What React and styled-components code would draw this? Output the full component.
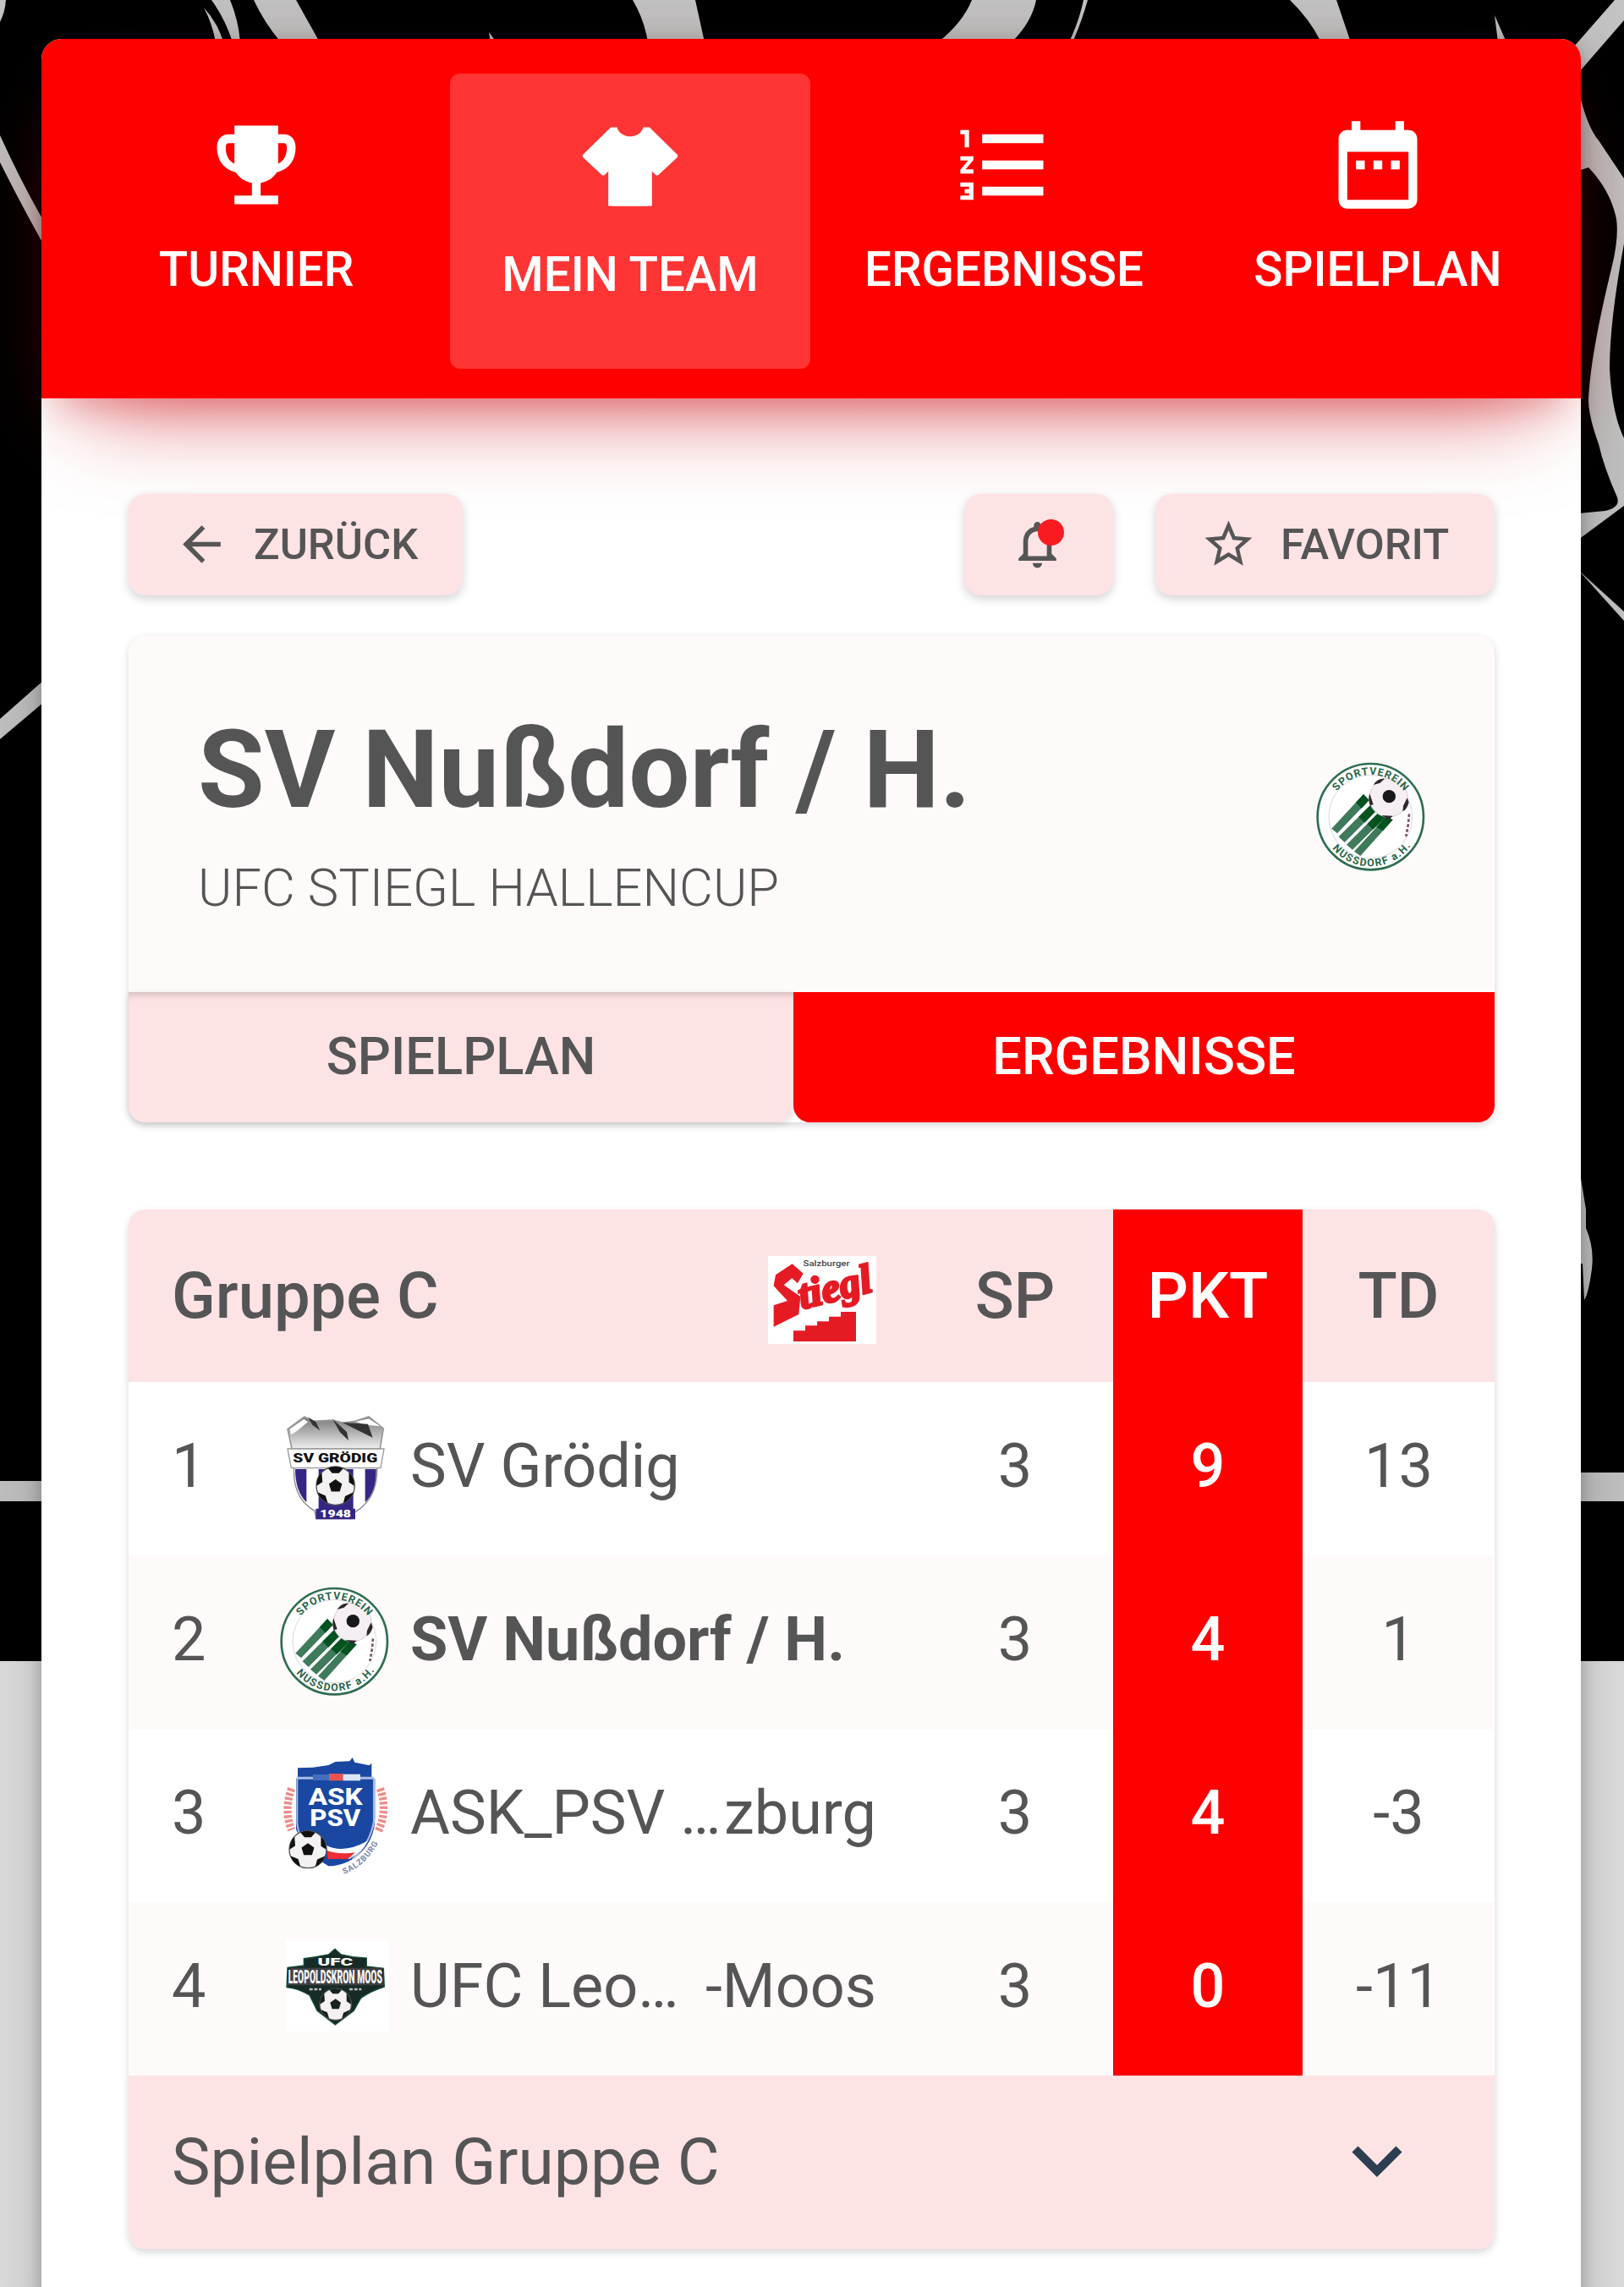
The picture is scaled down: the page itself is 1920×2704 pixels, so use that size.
import React from 'react'
import styled, { createGlobalStyle } from 'styled-components'
import { MdArrowBack, MdDateRange, MdFormatListNumbered, MdNotificationsNone, MdStarBorder } from 'react-icons/md'

const tabs = [
    { label: 'TURNIER', icon: 'trophy' },
    { label: 'MEIN TEAM', icon: 'shirt', active: true },
    { label: 'ERGEBNISSE', icon: 'list' },
    { label: 'SPIELPLAN', icon: 'calendar' },
]

const teams = [
    { rank: 1, logo: 'groedig', name: 'SV Grödig', sp: 3, pkt: 9, td: 13 },
    { rank: 2, logo: 'nussdorf', name: 'SV Nußdorf / H.', sp: 3, pkt: 4, td: 1, own: true },
    { rank: 3, logo: 'ask', name: 'ASK_PSV …', end: 'zburg', sp: 3, pkt: 4, td: -3 },
    { rank: 4, logo: 'moos', name: 'UFC Leo…', end: '-Moos', sp: 3, pkt: 0, td: -11 },
]

const Backdrop = () => (
    <BackdropSvg viewBox="0 0 1920 1964" preserveAspectRatio="none">
        <rect width="1920" height="1964" fill="#000" />
        <g fill="#c4c3c3">
            <path d="M0 0H7Q6 14 0 26Z" />
            <path d="M241 9Q258 28 264 50H255Q251 28 241 9Z" />
            <path d="M250 0H272Q282 24 284 50H275Q266 22 250 0Z" />
            <path d="M300 0H350L378 50H332Q312 26 300 0Z" />
            <path d="M578 38L587 50H580Z" />
            <path d="M748 0H822L833 50H766Q762 24 748 0Z" />
            <path d="M1149 0H1225Q1220 26 1196 50H1109Q1138 27 1149 0Z" />
            <path d="M1281 0H1286Q1278 28 1268 50H1264Q1276 24 1281 0Z" />
            <path d="M1525 0H1580L1597 50H1562Q1548 22 1525 0Z" />
            <path d="M1767 18L1781 50H1771Z" />
            <path d="M1909 0H1920V24L1868 84L1860 56Z" />
            <path d="M0 160Q25 215 52 262V290Q24 240 0 192Z" />
            <path d="M1866 105Q1876 150 1890 166L1920 211V288Q1903 380 1903 436Q1906 490 1920 518V598L1866 638V607L1898 604Q1916 600 1912 588Q1896 552 1890 525Q1878 492 1878 473Q1880 420 1906 314Q1914 280 1911 259Q1904 225 1878 198L1866 202Z" />
            <path d="M1866 674L1920 723V734Z" />
            <path d="M0 850L52 804V830L0 874Z" />
            <path d="M1866 1375L1875 1430V1452Q1885 1475 1882 1500Q1878 1530 1873 1537L1871 1494H1866Z" />
            <path d="M0 1751H52V1775H0ZM1866 1741H1920V1775H1866Z" />
        </g>
    </BackdropSvg>
)

const TabIcon = ({ name }) => {
    switch (name) {
        case 'trophy':
            return (
                <svg viewBox="0 0 24 24" fill="currentColor">
                    <path fillRule="evenodd" d="M7 3h10v2h1.200C20 5 21 6.200 21 8c0 2.900-1.500 5-4.300 5.700-.9 1.300-2 2.100-3.700 2.400V19h4v2H7v-2h4v-2.900c-1.700-.3-2.800-1.100-3.700-2.400C4.500 13 3 10.900 3 8c0-1.800 1-3 2.800-3H7V3zm0 4H5.700C5.200 7 5 7.400 5 8c0 1.800.700 3.200 2 3.700V7zm10 0v4.700c1.300-.500 2-1.900 2-3.700 0-.600-.200-1-.700-1H17z" />
                </svg>
            )
        case 'shirt':
            return (
                <svg viewBox="0 0 24 24" fill="currentColor">
                    <path d="M16 21H8V12.070l-1.800 1.800c-.200.200-.5.200-.7 0L1.260 9.900c-.2-.2-.2-.5 0-.7L7.590 3H9c.290 1.210 1.530 2.100 3 2.100s2.710-.890 3-2.100h1.410l6.330 6.200c.2.200.2.500 0 .7L18.500 13.870c-.2.200-.5.200-.7 0L16 12.070V21z" />
                    <path d="M7 11h10v10H7z" />
                </svg>
            )
        case 'list':
            return <MdFormatListNumbered />
        default:
            return <MdDateRange />
    }
}

const Ball = ({ x, y, r, spot = '#222' }) => (
    <g transform={`translate(${x} ${y}) scale(${r / 50})`}>
        <circle r="50" fill="#f4f1f2" stroke="#555" strokeWidth="3" />
        <path d="M0-17L17-5L11 15H-11L-17-5Z" fill={spot} />
        <path d="M-20-46Q0-54 20-45L9-33H-9ZM35-35Q50-20 49 0L35-9ZM47 17Q38 38 20 46L25 27ZM-20 46Q-38 38-47 17L-26 26ZM-49 0Q-50-20-36-35L-34-10Z" fill={spot} />
    </g>
)

const logos = {
    groedig: (
        <svg viewBox="30 61 390 390">
            <defs>
                <linearGradient id="rock" x1="0" y1="0" x2="0" y2="1">
                    <stop offset="0" stopColor="#777" />
                    <stop offset="1" stopColor="#eee" />
                </linearGradient>
            </defs>
            <path d="M83 250H377Q382 365 300 414L290 438H162L156 410Q76 365 83 250Z" fill="#fff" stroke="#888" strokeWidth="4" />
            <path d="M87 262H127V380Q87 340 87 262ZM335 262H374Q376 340 335 380ZM170 262H293V438H162V405H170Z" fill="#352684" />
            <path d="M60 120L120 76L150 92L220 88L255 97L300 92L348 76L400 118L388 190H75Z" fill="url(#rock)" stroke="#999" strokeWidth="5" />
            <path d="M68 120L118 84L132 95L92 128L72 140ZM300 94L348 83L388 110L340 105Z" fill="#fff" />
            <path d="M133 78L160 94L175 125L148 105ZM220 85L270 130L276 160L245 130ZM255 97L345 102L362 150L310 125Z" fill="#333" />
            <path d="M60 190H402L390 258H73Z" fill="#fff" stroke="#999" strokeWidth="4" />
            <text x="229" y="239" fontSize="46" textLength="300" lengthAdjust="spacingAndGlyphs" textAnchor="middle" fontWeight="900" fill="#111">SV GRÖDIG</text>
            <Ball x={230} y={321} r={68} spot="#111" />
            <path d="M160 402H300V440H160Z" fill="#352684" />
            <text x="230" y="433" fontSize="36" textLength="110" lengthAdjust="spacingAndGlyphs" textAnchor="middle" fontWeight="900" fill="#fff">1948</text>
        </svg>
    ),
    nussdorf: (
        <svg viewBox="30 48 390 390">
            <defs>
                <path id="arcTop" d="M77 245A149 149 0 0 1 375 245" />
                <path id="arcBottom" d="M50 245A176 176 0 0 0 402 245" />
            </defs>
            <circle cx="226" cy="245" r="188" fill="#fff" stroke="#2d6e50" strokeWidth="8" />
            <circle cx="226" cy="245" r="148" fill="none" stroke="#dcd7dd" strokeWidth="3" />
            <path d="M201 165L221 186L108 304L88 287Z" fill="#3f7a5b" />
            <path d="M229 200L250 220L134 336L113 316ZM256 229L277 248L162 362L141 344Z" fill="#3f7a5b" />
            <path d="M282 244L305 256L190 384L168 368Z" fill="#3f7a5b" />
            <path d="M201 165L221 186L194 215L174 194ZM229 200L250 220L205 266L184 245ZM256 229L277 248L235 290L214 271ZM282 244L305 256L270 295L247 281Z" fill="#04521f" />
            <circle cx="290" cy="178" r="68" fill="#f5eff3" stroke="#d5cdd2" strokeWidth="3" />
            <circle cx="292" cy="173" r="23" fill="#17171c" />
            <path d="M236 132Q252 108 276 110L260 125ZM356 178L362 194Q356 218 340 226L342 206ZM223 163L236 202L224 205Q216 184 223 163ZM265 240L305 242L292 255Z" fill="#30282d" />
            <path d="M363 235L360 270L352 315" stroke="#756" strokeWidth="8" strokeDasharray="11 7" fill="none" />
            <text fontSize="37" fontWeight="700" fill="#286447" textAnchor="middle">
                <textPath href="#arcTop" startOffset="50%" textLength="275">SPORTVEREIN</textPath>
            </text>
            <text fontSize="37" fontWeight="700" fill="#286447" textAnchor="middle">
                <textPath href="#arcBottom" startOffset="51%" textLength="320">NUSSDORF a.H.</textPath>
            </text>
        </svg>
    ),
    ask: (
        <svg viewBox="30 61 390 390">
            <defs>
                <path id="arcCity" d="M256 470Q365 430 405 300" />
            </defs>
            <path d="M74 165Q46 240 74 312M388 165Q416 240 382 315" stroke="#ef8d89" strokeWidth="28" strokeDasharray="10 6" fill="none" />
            <path d="M96 92L150 90L205 82L230 70L280 68L290 55L298 72L350 83L358 75V130H370V270C370 370 290 440 205 440L125 390L90 310V130H96Z" fill="#1947a1" />
            <path d="M94 131V290Q104 370 165 405M366 131V280Q354 360 290 415" stroke="#a9bde4" strokeWidth="6" fill="none" />
            <path d="M92 128H366" stroke="#a9bde4" strokeWidth="9" />
            <path d="M150 115H208V136H150Z" fill="#426fc0" />
            <path d="M207 112H257V137H207Z" fill="#e75450" />
            <path d="M257 114H318V137H257Z" fill="#dbe6f4" />
            <path d="M198 367Q260 398 345 350Q325 390 280 414H205Z" fill="#fff" />
            <path d="M200 385Q245 400 300 392L274 415H203Z" fill="#ed2f35" />
            <g fontSize="81" fontWeight="800" fill="#fff" textAnchor="middle">
                <text x="230" y="224" textLength="192" lengthAdjust="spacingAndGlyphs">ASK</text>
                <text x="229" y="297" textLength="180" lengthAdjust="spacingAndGlyphs">PSV</text>
            </g>
            <Ball x={132} y={381} r={66} spot="#111" />
            <text fontSize="29" fontWeight="700" fill="#7787a8" letterSpacing="3">
                <textPath href="#arcCity" startOffset="4">SALZBURG</textPath>
            </text>
        </svg>
    ),
    moos: (
        <svg viewBox="30 18 390 390">
            <path d="M55 45H420V370H55Z" fill="#fff" />
            <path d="M118 110L160 104L205 96L228 76L250 96L290 104L340 108V138L400 145L403 210Q355 225 320 250L295 295L229 345L165 295L138 240Q95 215 57 212L60 142L118 135Z" fill="#172b26" stroke="#164d3c" strokeWidth="4" />
            <text x="229" y="136" fontSize="38" textLength="125" lengthAdjust="spacingAndGlyphs" textAnchor="middle" fontWeight="900" fill="#fff">UFC</text>
            <path d="M68 143H394L400 205H60Z" fill="#403f43" />
            <text transform="translate(229 198) scale(1 2.1)" fontSize="31" textAnchor="middle" fontWeight="900" fill="#f5f5f5">LEOPOLDSKRON MOOS</text>
            <path d="M137 219H180M279 219H322" stroke="#bbb" strokeWidth="8" strokeDasharray="12 5" />
            <Ball x={230} y={272} r={56} spot="#18231f" />
        </svg>
    ),
}

const StieglLogo = () => (
    <Sponsor viewBox="55 42 384 312">
        <path d="M55 42H439V354H55Z" fill="#fff" />
        <text x="262" y="79" fontSize="27" textLength="165" lengthAdjust="spacingAndGlyphs" textAnchor="middle" fill="#444">Salzburger</text>
        <path d="M141 70L180 104L160 139L140 121L111 145L170 186L164 249L75 293V217L124 201L75 148L82 109Z" fill="#e51b24" />
        <g transform="rotate(-14 180 226)">
            <text x="174" y="229" fontSize="146" fontFamily="'Liberation Serif', serif" fontWeight="900" fontStyle="italic" textLength="264" lengthAdjust="spacingAndGlyphs" fill="#e51b24" stroke="#e51b24" strokeWidth="9">tiegl</text>
        </g>
        <path d="M145 345V307H187V289H229V274H271V257H313V240H367V345Z" fill="#e51b24" />
    </Sponsor>
)

const App = () => {
    return (
        <>
            <GlobalStyle />
            <Page>
                <Backdrop />
                <Card>
                    <Nav>
                        {tabs.map(tab => (
                            <NavItem key={tab.label} $active={tab.active}>
                                <TabIcon name={tab.icon} />
                                <span>{tab.label}</span>
                            </NavItem>
                        ))}
                    </Nav>
                    <Content>
                        <Toolbar>
                            <Button $width="395px">
                                <MdArrowBack />
                                <span>ZURÜCK</span>
                            </Button>
                            <Actions>
                                <Button $width="176px" $center>
                                    <Bell>
                                        <MdNotificationsNone />
                                        <Dot />
                                    </Bell>
                                </Button>
                                <Button $width="401px">
                                    <MdStarBorder />
                                    <span>FAVORIT</span>
                                </Button>
                            </Actions>
                        </Toolbar>
                        <TeamCard>
                            <TeamHead>
                                <div>
                                    <TeamName>SV Nußdorf / H.</TeamName>
                                    <Cup>UFC STIEGL HALLENCUP</Cup>
                                </div>
                                <Logo>{logos.nussdorf}</Logo>
                            </TeamHead>
                            <Switch>
                                <SwitchItem>SPIELPLAN</SwitchItem>
                                <SwitchItem $active>ERGEBNISSE</SwitchItem>
                            </Switch>
                        </TeamCard>
                        <Table>
                            <Row $head>
                                <Group>
                                    <span>Gruppe C</span>
                                    <StieglLogo />
                                </Group>
                                <Cell>SP</Cell>
                                <Cell $points>PKT</Cell>
                                <Cell>TD</Cell>
                            </Row>
                            {teams.map(team => (
                                <Row key={team.rank} $even={team.rank % 2 === 0}>
                                    <Team>
                                        <Rank>{team.rank}</Rank>
                                        <Logo>{logos[team.logo]}</Logo>
                                        <Name $own={team.own}>
                                            <span>{team.name}</span>
                                            {team.end && <span>{team.end}</span>}
                                        </Name>
                                    </Team>
                                    <Cell>{team.sp}</Cell>
                                    <Cell $points>{team.pkt}</Cell>
                                    <Cell>{team.td}</Cell>
                                </Row>
                            ))}
                            <Footer>
                                <span>Spielplan Gruppe C</span>
                                <svg width="60" height="40" viewBox="0 0 60 40">
                                    <path d="M4 5L30 31L56 5" fill="none" stroke="#2c3e50" strokeWidth="10" />
                                </svg>
                            </Footer>
                        </Table>
                    </Content>
                </Card>
            </Page>
        </>
    )
}

const GlobalStyle = createGlobalStyle`
    *{
        box-sizing: border-box;
    }
    body{
        margin: 0;
        font-family: Roboto, sans-serif;
        color: #555;
    }
`

const Page = styled.div`
    position: relative;
    width: 1920px;
    height: 2704px;
    padding: 46px 51px 0 49px;
    background: #dfdfdf;
    overflow: hidden;
`

const BackdropSvg = styled.svg`
    position: absolute;
    top: 0;
    left: 0;
    width: 1920px;
    height: 1964px;
`

const Card = styled.main`
    position: relative;
    height: 2720px;
    background: #fff;
    border-radius: 24px 24px 0 0;
    box-shadow: 0 8px 20px rgba(0,0,0,0.25), 0 20px 90px rgba(0,0,0,0.2);
`

const Nav = styled.nav`
    position: relative;
    display: flex;
    gap: 16px;
    height: 425px;
    padding: 41px 27px 34px 41px;
    background: #ff0000;
    border-radius: 24px 24px 0 0;
    box-shadow: 0 58px 112px -50px rgba(205,0,10,0.62),
        0 16px 80px rgba(205,0,0,0.05),
        0 31px 39px -20px rgba(190,0,10,0.2);
`

const NavItem = styled.div`
    flex: 1;
    height: ${props => props.$active ? '349px' : '340px'};
    padding-top: ${props => props.$active ? '48px' : '46px'};
    display: flex;
    flex-direction: column;
    align-items: center;
    border-radius: 12px;
    background: ${props => props.$active ? '#ff3434' : 'transparent'};
    color: #fff;
    font-size: 56.5px;
    font-weight: 500;
    line-height: 68px;
    white-space: nowrap;
    svg{
        width: 124px;
        height: 124px;
    }
    span{
        margin-top: ${props => props.$active ? '32px' : '28px'};
    }
`

const Content = styled.div`
    padding: 113px 102px 0 103px;
`

const Toolbar = styled.div`
    display: flex;
    justify-content: space-between;
`

const Actions = styled.div`
    display: flex;
    gap: 50px;
`

const Button = styled.div`
    position: relative;
    width: ${props => props.$width};
    height: 120px;
    display: flex;
    align-items: center;
    justify-content: ${props => props.$center ? 'center' : 'flex-start'};
    gap: 28px;
    padding: ${props => props.$center ? '0 3px 1px 0' : '0 0 1px 53px'};
    border-radius: 20px;
    background: #fde3e4;
    box-shadow: 0 4px 12px rgba(0,0,0,0.18);
    font-size: 50.8px;
    font-weight: 500;
    svg{
        width: 67px;
        height: 67px;
    }
`

const Bell = styled.div`
    position: relative;
    display: flex;
`

const Dot = styled.i`
    position: absolute;
    top: 4px;
    right: 2px;
    width: 31px;
    height: 31px;
    border-radius: 50%;
    background: #fa1a20;
`

const TeamCard = styled.section`
    margin-top: 48px;
    border-radius: 20px;
    box-shadow: 0 3px 10px rgba(0,0,0,0.16);
`

const TeamHead = styled.div`
    height: 421px;
    display: flex;
    justify-content: space-between;
    align-items: center;
    padding: 4px 82px 0 82px;
    border-radius: 20px 20px 0 0;
    background: #fdfaf9;
`

const TeamName = styled.h1`
    margin: -9px 0 0;
    font-size: 128px;
    font-weight: 700;
    line-height: 150px;
    white-space: nowrap;
`

const Cup = styled.div`
    margin-top: 29px;
    font-size: 61.4px;
    font-weight: 300;
    line-height: 72px;
`

const Switch = styled.div`
    display: flex;
    height: 154px;
    border-radius: 0 0 20px 20px;
`

const SwitchItem = styled.div`
    width: ${props => props.$active ? '829px' : '786px'};
    display: flex;
    align-items: center;
    justify-content: center;
    padding-bottom: 2px;
    border-radius: 0 0 20px 20px;
    background: ${props => props.$active ? '#ff0000' : '#fde3e4'};
    box-shadow: ${props => props.$active ? 'none' : 'inset 0 9px 9px -6px rgba(0,0,0,0.18), 0 3px 8px rgba(0,0,0,0.12)'};
    color: ${props => props.$active ? '#fff' : '#555'};
    font-size: 61.4px;
    font-weight: 500;
`

const Table = styled.section`
    margin-top: 103px;
    border-radius: 20px;
    overflow: hidden;
    box-shadow: 0 4px 10px rgba(0,0,0,0.16);
`

const Row = styled.div`
    display: grid;
    grid-template-columns: 932px 232px 224px 227px;
    height: ${props => props.$head ? '204px' : '205px'};
    background: ${props => props.$head ? '#fde3e4' : props.$even ? '#fdfaf9' : '#fff'};
    font-size: ${props => props.$head ? '76px' : '72px'};
    line-height: 84px;
    font-weight: ${props => props.$head ? 500 : 400};
`

const Group = styled.div`
    display: flex;
    align-items: center;
    justify-content: space-between;
    padding: 0 48px 0 51px;
`

const Sponsor = styled.svg`
    width: 128px;
    height: 104px;
    margin-top: 9px;
`

const Team = styled.div`
    display: flex;
    align-items: center;
    padding: 0 48px 3px 51px;
`

const Rank = styled.span`
    width: 127px;
    padding-bottom: 3px;
`

const Logo = styled.div`
    flex-shrink: 0;
    width: 130px;
    height: 130px;
    svg{
        display: block;
        width: 130px;
        height: 130px;
        overflow: visible;
    }
`

const Name = styled.div`
    flex: 1;
    display: flex;
    justify-content: space-between;
    margin-left: 25px;
    padding-bottom: 3px;
    font-weight: ${props => props.$own ? 700 : 400};
    white-space: nowrap;
`

const Cell = styled.div`
    display: flex;
    align-items: center;
    justify-content: center;
    background: ${props => props.$points ? '#ff0000' : 'transparent'};
    color: ${props => props.$points ? '#fff' : 'inherit'};
    font-weight: ${props => props.$points ? 500 : 'inherit'};
    ${Row}:not(:first-child) &{
        padding-bottom: 6px;
    }
`

const Footer = styled.div`
    display: flex;
    align-items: center;
    justify-content: space-between;
    height: 205px;
    padding: 0 109px 2px 51px;
    background: #fde3e4;
    font-size: 76.7px;
`

export default App
